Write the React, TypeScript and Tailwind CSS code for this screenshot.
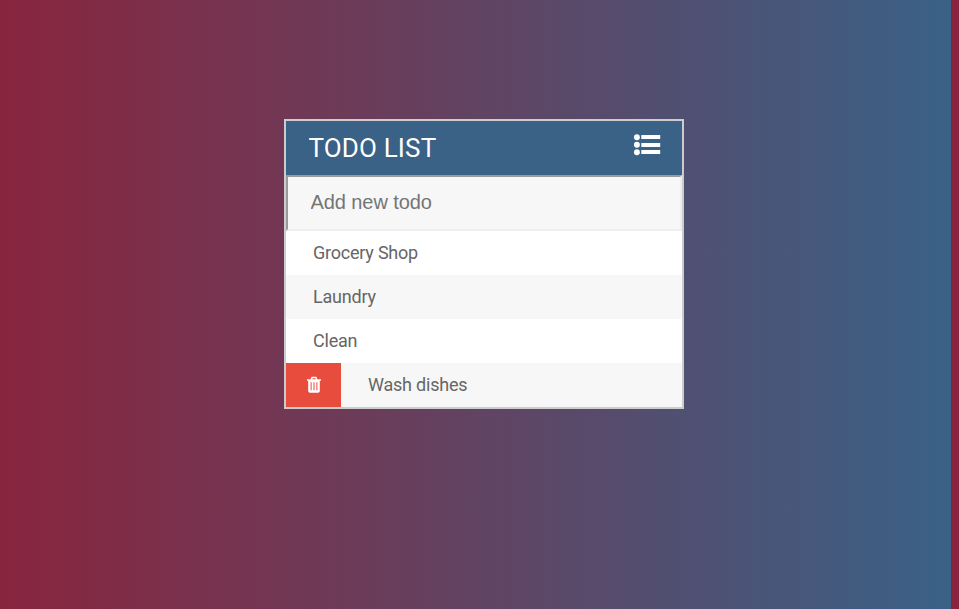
const todos = ["Grocery Shop", "Laundry", "Clean"];

function ListIcon() {
  return (
    <svg className="mt-[13px] h-[22px] w-7" viewBox="0 0 28 22" fill="currentColor">
      {[3.3, 10.8, 18.3].map((y) => (
        <g key={y}>
          <circle cx="3.9" cy={y} r="2.95" />
          <rect x="8.3" y={Math.round(y - 2)} width="18.9" height="4" />
        </g>
      ))}
    </svg>
  );
}

function TrashIcon() {
  return (
    <svg className="h-[18px] w-4" viewBox="0 0 16 18" fill="none" stroke="currentColor">
      <path d="M1 4h14M5.3 3.5l.8-2h3.8l.8 2" strokeWidth="1.5" />
      <path fill="currentColor" fillRule="evenodd" stroke="none" d="M2.2 4h11.6v11q0 1.7-1.7 1.7H3.9q-1.7 0-1.7-1.7zM4.6 6.2v8h1v-8zm2.9 0v8h1v-8zm2.9 0v8h1v-8z" />
    </svg>
  );
}

export default function App() {
  return (
    <div className="flex h-[609px] w-full bg-[#8a243e] font-[Roboto,sans-serif]">
      <div className="flex w-[951px] items-start justify-center bg-linear-to-r/srgb from-[#89253e] to-[#3a6186] pt-[119px] pl-[17px]">
        <main className="w-[400px] border-2 border-[#cccccc] bg-[#f7f7f7]">
          <header className="flex h-[54px] justify-between bg-[#3a6186] pr-[21px] pl-[22.5px] text-white">
            <h1 className="text-[26px] leading-[54px] tracking-[0.15px]">TODO LIST</h1>
            <ListIcon />
          </header>
          <input
            className="block h-14 w-full border-2 border-t-[#9a9a9a] border-r-[#eeeeee] border-b-[#eeeeee] border-l-[#9a9a9a] bg-[#f7f7f7] px-[22.5px] pb-0.5 font-['Liberation_Sans',Arial,sans-serif] text-[20px] tracking-[-0.08px] placeholder:text-[#757575]"
            placeholder="Add new todo"
          />
          <ul className="text-[18px] leading-[44px] tracking-[-0.22px] text-[#666666]">
            {todos.map((todo) => (
              <li key={todo} className="h-11 pl-[27px] odd:bg-white">{todo}</li>
            ))}
            <li className="flex h-11">
              <span className="flex w-[55px] items-center justify-center bg-[#e74c3c] text-white"><TrashIcon /></span>
              <span className="pl-[27px]">Wash dishes</span>
            </li>
          </ul>
        </main>
      </div>
    </div>
  );
}
